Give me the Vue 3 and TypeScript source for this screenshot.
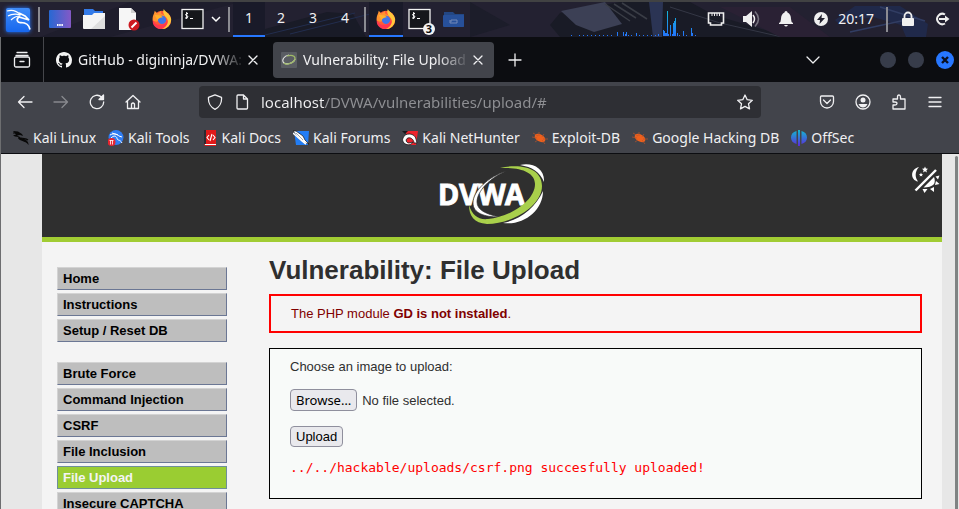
<script setup lang="ts">
import { ref } from 'vue'

interface Bookmark {
  icon: string
  label: string
}

interface MenuItem {
  label: string
  active?: boolean
}

const art: Record<string, string> = {
  firefox:
    '<circle cx="12" cy="13" r="10" fill="#ff5a36"/><path d="M2 14C1 9 4 6 4 3l3 3 4-3c-1 3 1 4 4 5l-2 4-7 3z" fill="#ff9330"/><path d="M12 23C5 23 1 18 2 13c2 5 6 6 10 5 4 0 6-3 5-7 3 3 2 9-5 12z" fill="#ff3750"/><path d="M14 1c1 3 7 5 8 11 0 6-4 11-10 11 6-3 8-8 5-12-2-3-5-5-3-10z" fill="#ffc83b"/><circle cx="12" cy="13" r="4.5" fill="#3f75e8"/><path d="M4 8c3-1 7 0 9 2-3 0-4 1-6 3z" fill="#ffb12b"/>',
  terminal:
    '<rect x="1" y="2.500" width="21" height="19" fill="#15171b" stroke="#f2f2f2" stroke-width="1.300"/><path d="M7 6.500H5.500L4.500 8l2.500 1.500-1 1.500H4M5.700 5v7M9 11.500h3" fill="none" stroke="#fff" stroke-width="1"/>',
  dragon:
    '<path d="M0 1l5 .5 4 2.500 1 2-3-1-3 .5 3 1.500c1 2 5 1 7 4 1 1 1.500 2 1.500 4-2-3-4-3-6-4-4-1-5-3-4-4L2 6.500 0 5.500l3-1z" fill="#080808"/><path d="M0 3l6 0M8 8c3 1 5 0 7 2" fill="none" stroke="#080808" stroke-width="1.200"/>',
  tools:
    '<circle cx="8" cy="7.500" r="7.500" fill="#2f7df3"/><path d="M2 5c4-2 7-1 9 1l3 1M3 8c3-3 5-2 6 0 0 3 3 1 5 5M4 3l6 2" fill="none" stroke="#fff" stroke-width="1"/><circle cx="3.500" cy="12" r="4" fill="#e6242f"/><path d="M1.500 10.500h4M2.500 10.500v4M4.500 10.500v4" stroke="#fff" stroke-width=".8"/>',
  docs:
    '<path d="M2 0h12v16H4q-2 0-2-2z" fill="#e01919"/><path d="M2 0h2v14H2z" fill="#2b2b31"/><path d="M3 14h11v1H3z" fill="#fff"/><path d="M7 5L5 7.500 7 10M11 5l2 2.500L11 10M10 4L8 11" fill="none" stroke="#fff" stroke-width="1.100"/>',
  forums:
    '<path d="M1 1h15l-1 14H3z" fill="#227df5"/><path d="M0 1l3 0 7 5 2 4 4 4-4-1-6-4z" fill="#fff" stroke="#111" stroke-width=".7"/><path d="M0 3l9 8 4 3" stroke="#fff" stroke-width="1.600" fill="none"/><path d="M3 3l7 7" stroke="#777f88" stroke-width=".7"/>',
  nethunter:
    '<path d="M4 1h12l-2 14H5z" fill="#ed232c"/><path d="M0 1l6 0-3 3z" fill="#17171b"/><path d="M1 8c2-6 12-5 13 1l1 4-3 0c0-3-3-6-6-5-3 1-2 5 1 5l4-1c-2 4-7 3-9 1-1-1-2-3-1-5z" fill="#fff" stroke="#17171b" stroke-width=".8"/>',
  bug:
    '<ellipse cx="8" cy="8" rx="5.800" ry="3.600" transform="rotate(30 8 8)" fill="#ee601c"/><path d="M1 3l5 3M7 2v4M12 4l-2 3M0 7l5 1M3 12l3-2M13 14l-3-4M16 9l-5 0" stroke="#b8552c" stroke-width=".7"/>',
  offsec:
    '<defs><linearGradient id="os" gradientUnits="userSpaceOnUse" x1="0" y1="0" x2="0" y2="16"><stop stop-color="#11bad1"/><stop offset="1" stop-color="#5c29dc"/></linearGradient></defs><path d="M5.500 1v13C2 13 0 11 0 7.500S2 2 5.500 1zM10.500 1v13c3.500-1 5.500-3 5.500-6.500S14 2 10.500 1zM7 0h2v16H7z" fill="url(#os)"/>',
}

const bookmarks: Bookmark[] = [
  { icon: 'dragon', label: 'Kali Linux' },
  { icon: 'tools', label: 'Kali Tools' },
  { icon: 'docs', label: 'Kali Docs' },
  { icon: 'forums', label: 'Kali Forums' },
  { icon: 'nethunter', label: 'Kali NetHunter' },
  { icon: 'bug', label: 'Exploit-DB' },
  { icon: 'bug', label: 'Google Hacking DB' },
  { icon: 'offsec', label: 'OffSec' },
]

const workspaces = [1, 2, 3, 4]
const currentWorkspace = ref(1)
const address = ref('localhost/DVWA/vulnerabilities/upload/#')

const menu: MenuItem[][] = [
  [{ label: 'Home' }, { label: 'Instructions' }, { label: 'Setup / Reset DB' }],
  [
    { label: 'Brute Force' },
    { label: 'Command Injection' },
    { label: 'CSRF' },
    { label: 'File Inclusion' },
    { label: 'File Upload', active: true },
    { label: 'Insecure CAPTCHA' },
  ],
]

// [x, height] of every sample in the load graph
const load: [number, number][] = [
  [0, 1], [8, 1], [12, 1], [16, 1], [20, 1], [24, 1], [28, 1], [32, 1], [36, 1], [40, 1],
  [46, 4], [52, 4], [54, 2], [55, 4], [57, 1], [60, 1], [65, 3], [68, 1], [72, 1], [76, 1],
  [80, 1], [84, 1], [87, 2], [92, 6], [93, 5], [94, 3], [95, 3], [96, 25], [97, 2], [99, 11],
  [101, 2], [102, 13], [103, 15], [104, 18], [106, 3], [108, 1], [112, 5], [115, 1], [120, 8], [121, 3], [124, 1],
]
</script>

<template>
  <div class="screen">
    <header class="panel">
      <svg class="wallpaper" viewBox="0 0 959 35" preserveAspectRatio="none" aria-hidden="true">
        <rect width="959" height="35" fill="#232131" />
        <path d="M40 35L130 0h110L110 35z" fill="#1e1d2c" />
        <path d="M235 35V12l30 15 62-17 26 2 13 23z" fill="#191b27" />
        <path d="M265 33l90-22M290 32l80-20" stroke="#222d4e" />
        <path d="M470 0l40 23-40 12z" fill="#1c1d2a" />
        <path d="M550 23l10-12 60-11h70l24 13 75 22H560z" fill="#191b26" />
        <path d="M561 9l44-9 17 22-28 8-18-7z" fill="#3c4055" />
        <path d="M605 2l25 17M614 2l22 14M622 1l25 16" stroke="#3a3d46" stroke-width="1.500" />
        <path d="M649 0l4 35h9l1-35z" fill="#2b3454" />
        <path d="M670 5l50 16 62 14" stroke="#343745" fill="none" />
        <path d="M720 5h70l40 30h-50z" fill="#2a2134" />
        <path d="M835 18l20-14 45 0 28 18-2 13h-20l-5-12-28-8-35 6z" fill="#20294a" />
        <path d="M850 30l65-14M880 5l45 14" stroke="#313d63" stroke-width="1.500" />
      </svg>
      <button class="kali" aria-label="Applications">
        <svg viewBox="0 0 28 28" width="28" height="28"><defs><linearGradient id="kg" x2="0" y2="1"><stop stop-color="#3f8cf8" /><stop offset="1" stop-color="#1767ee" /></linearGradient></defs><rect x="2" y="2" width="24" height="24" rx="2" fill="url(#kg)" /><path d="M3 5c6-2 10 0 14 4M4 10c5-3 9-2 13-1M7 14c3-3 6-4 9-4" fill="none" stroke="#fff" stroke-width="1.200" /><path d="M15 7l6 3 4 4-5-1.500-5-1.500c-3 2-2 6 2 5.500 4 0 8 2 9 7" fill="none" stroke="#fff" stroke-width="1.700" /></svg>
      </button>
      <span class="divider"></span>
      <nav class="launchers" aria-label="Launchers">
        <button class="slot" aria-label="Show desktop"><svg viewBox="0 0 24 24" width="24" height="24"><defs><linearGradient id="dg"><stop stop-color="#2768d3" /><stop offset="1" stop-color="#8459c6" /></linearGradient></defs><rect x="1" y="3" width="22" height="18" rx="1" fill="url(#dg)" /><path d="M9 18h6" stroke="#fff" stroke-width="2" stroke-dasharray="1.500 .7" /></svg></button>
        <button class="slot" aria-label="File manager"><svg viewBox="0 0 24 24" width="24" height="24"><path d="M2 2h9l2 2h8v7H2z" fill="#337ae8" /><path d="M1 8h9l2-2h11v15q0 1-1 1H2q-1 0-1-1z" fill="#f4f4f4" /><path d="M23 9v13H9z" fill="#dedede" /></svg></button>
        <button class="slot" aria-label="Text editor"><svg viewBox="0 0 24 24" width="24" height="24"><path d="M3 1h12l5 5v17H3z" fill="#f6f6f6" /><path d="M15 1v5h5z" fill="#cfcfcf" /><circle cx="18" cy="18" r="5.500" fill="#cd1920" /><path d="M15.500 20.500l5-5" stroke="#fff" stroke-width="2" /></svg></button>
        <button class="slot" aria-label="Web browser"><svg viewBox="0 0 24 24" width="22" height="22" v-html="art.firefox"></svg></button>
        <button class="slot small" aria-label="Terminal"><svg viewBox="0 0 24 24" width="24" height="24" v-html="art.terminal"></svg></button>
        <button class="slot tiny" aria-label="More terminals"><svg viewBox="0 0 10 10" width="10" height="10"><path d="M1 3l4 4 4-4" fill="none" stroke="#fff" stroke-width="1.500" /></svg></button>
      </nav>
      <span class="divider"></span>
      <nav class="workspaces" aria-label="Workspaces">
        <button v-for="n in workspaces" :key="n" class="workspace" :class="{ current: n === currentWorkspace }" @click="currentWorkspace = n">{{ n }}</button>
      </nav>
      <span class="divider"></span>
      <nav class="tasks" aria-label="Windows">
        <button class="slot current" aria-label="Firefox"><svg viewBox="0 0 24 24" width="22" height="22" v-html="art.firefox"></svg></button>
        <button class="slot task" aria-label="Terminal windows"><svg viewBox="0 0 24 24" width="24" height="24" v-html="art.terminal"></svg><span class="count">3</span></button>
        <button class="slot" aria-label="Files"><svg viewBox="0 0 24 24" width="24" height="24"><path d="M2 5h9l2 2h9v12q0 1-1 1H2z" fill="#234784" /><rect x="1" y="8" width="21" height="12" rx="1" fill="#27509a" /><path d="M9 15v-2h6v3H8v-3" fill="none" stroke="#7489b8" /></svg></button>
      </nav>
      <svg class="load" viewBox="0 0 127 30" width="127" height="30" aria-hidden="true">
        <defs><linearGradient id="lg" gradientUnits="userSpaceOnUse" x1="0" y1="4" x2="0" y2="30"><stop stop-color="#12b9d8" /><stop offset="1" stop-color="#2474fa" /></linearGradient></defs>
        <rect v-for="bar in load" :key="bar[0]" :x="bar[0]" :y="30 - bar[1]" width="1" :height="bar[1]" fill="url(#lg)" />
      </svg>
      <div class="tray">
        <button class="slot" aria-label="Network"><svg viewBox="0 0 18 16" width="18" height="16"><path d="M1.500 2h15v10h-2v2h-11v-2h-2z" fill="none" stroke="#eee" stroke-width="1.600" /><path d="M5 2v3M7.500 2v3M10 2v3M12.500 2v3" stroke="#eee" /></svg></button>
        <button class="slot" aria-label="Volume"><svg viewBox="0 0 18 18" width="18" height="18"><path d="M1 6h3l6-5v16l-6-5H1z" fill="#f0f0f0" /><path d="M11 5q3 4 0 8" fill="none" stroke="#f0f0f0" stroke-width="1.500" /><path d="M13 1.500q7 7.500 0 15" fill="none" stroke="#77747f" stroke-width="1.500" /></svg></button>
        <button class="slot" aria-label="Notifications"><svg viewBox="0 0 16 16" width="16" height="16"><path d="M8 0q1.500 0 1.500 1.500Q13 3 13 8q0 3 2 4v1H1v-1q2-1 2-4 0-5 3.500-6.500Q6.500 0 8 0zM6 14h4q-2 3-4 0z" fill="#f0f0f0" /></svg></button>
        <button class="slot" aria-label="Power"><svg viewBox="0 0 16 16" width="16" height="16"><circle cx="8" cy="8" r="7" fill="#f0f0f0" /><path d="M9 3L4 9h3l-.5 4L12 7H8.500z" fill="#22212f" /></svg></button>
      </div>
      <time class="clock">20:17</time>
      <span class="divider"></span>
      <div class="tray session">
        <button class="slot" aria-label="Lock"><svg viewBox="0 0 16 16" width="16" height="16"><path d="M4.500 7V5a3.500 3.500 0 017 0v2" fill="none" stroke="#eee" stroke-width="1.800" /><rect x="2" y="7" width="12" height="8" rx="1" fill="#f0f0f0" /></svg></button>
        <button class="slot" aria-label="Log out"><svg viewBox="0 0 16 16" width="16" height="16"><path d="M11 3.500a5.200 5.200 0 100 9M5 8h8" fill="none" stroke="#eee" stroke-width="2" /><path d="M11 4.500l4.500 3.500L11 11.500z" fill="#eee" /></svg></button>
      </div>
    </header>

    <div class="browser">
      <div class="tabbar">
        <button class="overview" aria-label="Firefox View"><svg viewBox="0 0 18 18" width="18" height="18" class="line"><path d="M4 1.500h10M3 4.500h12" /><rect x="1.500" y="6" width="15" height="10" rx="1.500" /><path d="M7 10.500h4" /></svg></button>
        <div class="tab">
          <svg viewBox="0 0 16 16" width="16" height="16"><path fill="#f4f4f4" d="M8 0C3.580 0 0 3.580 0 8c0 3.540 2.290 6.530 5.470 7.590.4.070.55-.17.55-.38 0-.19-.01-.82-.01-1.490-2.010.37-2.530-.49-2.690-.94-.09-.23-.48-.94-.82-1.130-.28-.15-.68-.52-.01-.53.63-.01 1.080.58 1.230.82.72 1.210 1.870.87 2.330.66.07-.52.28-.87.51-1.070-1.780-.2-3.640-.89-3.640-3.950 0-.87.31-1.590.82-2.150-.08-.2-.36-1.020.08-2.120 0 0 .67-.21 2.200.82.64-.18 1.320-.27 2-.27s1.360.09 2 .27c1.530-1.040 2.200-.82 2.200-.82.44 1.100.16 1.920.08 2.120.51.56.82 1.270.82 2.150 0 3.070-1.870 3.750-3.650 3.950.29.25.54.73.54 1.480 0 1.070-.01 1.930-.01 2.200 0 .21.15.46.55.38A8.010 8.010 0 0016 8c0-4.420-3.580-8-8-8z" /></svg>
          <span class="tab-title">GitHub - digininja/DVWA:</span>
          <button class="close" aria-label="Close tab"><svg viewBox="0 0 10 10" width="10" height="10" class="line"><path d="M1 1l8 8M9 1L1 9" /></svg></button>
        </div>
        <div class="tab selected">
          <svg viewBox="0 0 16 16" width="16" height="16"><rect width="16" height="16" rx="1" fill="#5a5d63" /><path d="M8 3C3 4 0 8 3 11c3 2 10 0 11-4" fill="none" stroke="#e1e3e0" stroke-width="1.100" /><path d="M6 4c6-2 10 1 7 5-3 3-8 4-10 2" fill="none" stroke="#9fb967" stroke-width="1.300" /></svg>
          <span class="tab-title">Vulnerability: File Upload :</span>
          <button class="close" aria-label="Close tab"><svg viewBox="0 0 10 10" width="10" height="10" class="line"><path d="M1 1l8 8M9 1L1 9" /></svg></button>
        </div>
        <button class="add" aria-label="New tab"><svg viewBox="0 0 14 14" width="14" height="14" class="line"><path d="M7 1v12M1 7h12" /></svg></button>
        <button class="add all" aria-label="List all tabs"><svg viewBox="0 0 14 8" width="14" height="8" class="line"><path d="M1 1l6 6 6-6" /></svg></button>
        <div class="window-controls">
          <button class="dot" aria-label="Minimize"></button>
          <button class="dot" aria-label="Maximize"></button>
          <button class="dot quit" aria-label="Close window"><svg viewBox="0 0 10 10" width="10" height="10"><path d="M2 2l6 6M8 2L2 8" stroke="#0b1020" stroke-width="2.400" /></svg></button>
        </div>
      </div>

      <div class="navbar">
        <button class="tool" aria-label="Back"><svg viewBox="0 0 16 16" width="16" height="16" class="line"><path d="M15 8H1.500M7 2.500L1.500 8 7 13.500" /></svg></button>
        <button class="tool" aria-label="Forward" disabled><svg viewBox="0 0 16 16" width="16" height="16" class="line"><path d="M1 8h13.500M9 2.500L14.500 8 9 13.500" /></svg></button>
        <button class="tool" aria-label="Reload"><svg viewBox="0 0 16 16" width="16" height="16" class="line"><path d="M12.500 3A6.700 6.700 0 1014.700 8" /><path d="M14.500 1v4.500H10z" fill="#f0f0f2" /></svg></button>
        <button class="tool" aria-label="Home"><svg viewBox="0 0 16 16" width="16" height="16" class="line"><path d="M1 8l7-6.500L15 8M2.500 7v7.500h11V7M6.500 14.500V10q1.500-2 3 0v4.500" /></svg></button>
        <div class="urlbar">
          <svg viewBox="0 0 16 16" width="16" height="16" class="line"><path d="M8 .8l6.500 2.600C15 9 12 13.500 8 15.300 4 13.500 1 9 1.500 3.400z" /></svg>
          <svg viewBox="0 0 16 16" width="16" height="16" class="line"><path d="M3 2q0-1 1-1h5.500l4 4v9q0 1-1 1H4q-1 0-1-1zM9.500 1v4h4" /></svg>
          <input v-model="address" class="address" type="text" aria-label="Address" spellcheck="false" />
          <button class="star" aria-label="Bookmark this page"><svg viewBox="0 0 16 16" width="16" height="16" class="line"><path d="M8 1l2.200 4.700 5.100.6-3.800 3.500 1 5.100L8 12.400l-4.500 2.500 1-5.100L.7 6.300l5.100-.6z" /></svg></button>
        </div>
        <button class="tool" aria-label="Save to Pocket"><svg viewBox="0 0 16 16" width="16" height="16" class="line"><path d="M2.500 2h11q1 0 1 1v4.500a6.500 6.500 0 01-13 0V3q0-1 1-1zM4.500 6L8 9.500 11.500 6" /></svg></button>
        <button class="tool" aria-label="Account"><svg viewBox="0 0 16 16" width="16" height="16" class="line"><circle cx="8" cy="8" r="7" /><circle cx="8" cy="6" r="2.500" fill="#f0f0f2" stroke="none" /><path d="M3.500 10h9q-1.500 3.500-4.500 3.500T3.500 10z" fill="#f0f0f2" stroke="none" /></svg></button>
        <button class="tool" aria-label="Extensions"><svg viewBox="0 0 16 16" width="16" height="16" class="line"><path d="M2 15v-4h2q2 0 2-1.500T4 8H2V5h4.500V3q0-2 1.500-2t1.500 2v2H14v10z" /></svg></button>
        <button class="tool" aria-label="Menu"><svg viewBox="0 0 16 16" width="16" height="16" class="line"><path d="M2 3.500h12M2 8h12M2 12.500h12" /></svg></button>
      </div>

      <nav class="bookmarks" aria-label="Bookmarks">
        <a v-for="mark in bookmarks" :key="mark.label" href="#">
          <svg viewBox="0 0 16 16" width="16" height="16" v-html="art[mark.icon]"></svg>
          <span>{{ mark.label }}</span>
        </a>
      </nav>

      <div class="viewport">
        <div class="page">
          <div class="banner">
            <svg class="logo" viewBox="0 0 112 68" width="112" height="68" role="img" aria-label="DVWA">
              <path d="M84 5c12-3 25 3 24 17C104 12 96 7 84 5zM107 31c0 19-19 35-40 32 17-3 33-16 40-32z" fill="#fff" />
              <text x="2" y="45">DVWA</text>
              <path d="M70 11C52 17 37 31 37 43c0 10 11 14 26 14-13-3-22-7-22-15 0-11 13-24 29-31z" fill="#fff" stroke="#2f2f2f" stroke-width=".7" />
              <path d="M64 8c21-5 42 0 42 18 0 20-30 38-55 38-13-1-18-8-18-19 3 10 9 15 19 14 22-2 47-18 47-35C99 12 84 7 64 8z" fill="#a9d04b" />
            </svg>
            <button class="theme" aria-label="Toggle theme"><svg viewBox="0 0 28 28" width="28" height="28"><path d="M7 1C-2 3-2 14 6 15.500 2.500 11 3 5 7 1zM13 .5l.9 2 2.100.2-1.600 1.500.5 2.200L13 5.300l-1.900 1.100.5-2.200L10 2.700l2.100-.2zM9 6.500l.6 1.400 1.500.1-1.100 1 .3 1.500L9 9.700l-1.300.8.3-1.500-1.100-1 1.500-.1z" fill="#fff" /><path d="M3.500 24.500L24 4" stroke="#fff" stroke-width="2.400" /><path d="M11.500 21.500L22 11q4 10-10.500 10.500zM23.500 10.500l4-1-1.500 4zM24 15l3.500 3-4.500 1zM18 23l4-2 0 5zM10.500 23l5 0-3 4z" fill="#fff" /></svg></button>
          </div>
          <div class="columns">
            <nav class="menu" aria-label="Main menu">
              <ul v-for="(group, i) in menu" :key="i">
                <li v-for="item in group" :key="item.label">
                  <a href="#" :class="{ active: item.active }">{{ item.label }}</a>
                </li>
              </ul>
            </nav>
            <main class="content">
              <h1>Vulnerability: File Upload</h1>
              <div class="warning">The PHP module <strong>GD is not installed</strong>.</div>
              <form class="upload" @submit.prevent>
                <p id="prompt">Choose an image to upload:</p>
                <div class="picker">
                  <input id="image" class="file" type="file" accept="image/*" aria-labelledby="prompt" />
                  <label for="image" class="button browse">Browse…</label>
                  <span>No file selected.</span>
                </div>
                <button type="submit" class="button">Upload</button>
                <pre>../../hackable/uploads/csrf.png succesfully uploaded!</pre>
              </form>
            </main>
          </div>
        </div>
        <div class="scrollbar"></div>
      </div>
    </div>
  </div>
</template>

<style>
body {
  margin: 0;
  overflow: hidden;
}
</style>

<style scoped>
.screen,
.screen * {
  box-sizing: border-box;
}

.screen {
  display: flex;
  flex-direction: column;
  height: 100vh;
  font-family: 'Noto Sans', 'Open Sans', sans-serif;
  font-size: 14px;
  color: #f0f0f2;
}

button {
  padding: 0;
  border: 0;
  background: none;
  color: inherit;
  font: inherit;
}

svg {
  display: block;
  flex: none;
}

.line {
  fill: none;
  stroke: #f0f0f2;
  stroke-width: 1.3;
  stroke-linejoin: round;
  stroke-linecap: round;
}

/* desktop panel */
.panel {
  position: relative;
  display: flex;
  flex: none;
  align-items: stretch;
  height: 37px;
  border-top: 2px solid #414243;
  background: #21202f;
}

.wallpaper {
  position: absolute;
  inset: 0;
  width: 100%;
  height: 100%;
}

.panel > :not(.wallpaper) {
  position: relative;
}

.kali {
  display: grid;
  place-items: center;
  width: 28px;
  margin: 0 6px 0 4px;
}

.kali svg {
  filter: drop-shadow(0 0 2px #2777ff);
}

.divider {
  flex: none;
  align-self: center;
  width: 2px;
  height: 25px;
  background: #8b8b92;
}

.launchers,
.workspaces,
.tasks,
.tray {
  display: flex;
  margin: 0 3px;
}

.launchers {
  margin-right: 2px;
}

.slot {
  display: grid;
  place-items: center;
  width: 34px;
  border-bottom: 2px solid transparent;
}

.slot.small {
  width: 27px;
}

.slot.tiny {
  width: 20px;
}

.workspace {
  width: 32px;
  padding-bottom: 2px;
  border-bottom: 2px solid transparent;
}

.current {
  border-bottom-color: #2777ff;
  background: #191a29;
}

.task {
  position: relative;
}

.count {
  position: absolute;
  right: 2px;
  bottom: 0;
  width: 12px;
  height: 12px;
  border-radius: 50%;
  background: #f2f2f2;
  color: #111;
  font-size: 11px;
  font-weight: 700;
  line-height: 12px;
}

.load {
  align-self: flex-end;
  margin: 0 0 1px auto;
}

.tray {
  margin: 0;
}

.tray .slot {
  width: 35px;
}

.clock {
  padding: 7px 12px 0 0;
}

.session {
  margin-left: 3px;
}

.session .slot {
  width: 34px;
}

/* browser */
.browser {
  display: flex;
  flex: 1;
  flex-direction: column;
  min-height: 0;
  border-left: 1px solid #6d6e70;
}

.tabbar {
  display: flex;
  flex: none;
  align-items: center;
  height: 45px;
  background: #0c0d11;
}

.overview {
  display: grid;
  align-self: stretch;
  place-items: center;
  width: 43px;
  margin-right: 4px;
  border-right: 1px solid #45464b;
}

.tab {
  display: flex;
  align-items: center;
  width: 221px;
  height: 36px;
  margin-right: 4px;
  padding: 0 8px;
  border-radius: 4px;
}

.tab.selected {
  background: #42444b;
}

.tab-title {
  flex: 1;
  min-width: 0;
  padding-left: 6px;
  overflow: hidden;
  white-space: nowrap;
  mask-image: linear-gradient(to left, transparent, #000 32px);
}

.close {
  padding: 3px;
}

.add {
  display: grid;
  place-items: center;
  width: 34px;
  height: 34px;
}

.all {
  margin-left: auto;
}

.window-controls {
  display: flex;
  align-items: center;
  gap: 12px;
  margin: 0 5px 0 50px;
}

.dot {
  width: 16px;
  height: 16px;
  border-radius: 50%;
  background: #373c4a;
}

.quit {
  display: grid;
  place-items: center;
  width: 18px;
  height: 18px;
  background: #2777ff;
}

.navbar {
  display: flex;
  flex: none;
  align-items: center;
  height: 40px;
  padding: 0 6px;
  background: #42444b;
}

.tool {
  display: grid;
  flex: none;
  place-items: center;
  width: 36px;
  height: 32px;
}

.tool:disabled {
  opacity: 0.4;
}

.urlbar {
  display: flex;
  flex: 1;
  align-items: center;
  gap: 11px;
  min-width: 0;
  height: 32px;
  margin: 0 48px;
  padding: 0 8px;
  border-radius: 4px;
  background: #2e2f34;
}

.address {
  flex: 1;
  min-width: 0;
  height: 24px;
  padding: 0;
  border: 0;
  outline: 0;
  background: linear-gradient(to right, #f0f0f2 64px, #8f9094 64px);
  background-clip: text;
  color: transparent;
  caret-color: #f0f0f2;
  font: inherit;
  font-size: 15px;
}

.bookmarks {
  display: flex;
  flex: none;
  align-items: center;
  gap: 12px;
  height: 32px;
  padding: 0 12px;
  border-bottom: 1px solid #0c0d11;
  background: #42444b;
}

.bookmarks a {
  display: flex;
  align-items: center;
  gap: 4px;
  color: inherit;
  white-space: nowrap;
  text-decoration: none;
}

/* page */
.viewport {
  display: flex;
  flex: 1;
  min-height: 0;
  overflow: hidden;
  background: #e7e7e7;
  font-family: 'Liberation Sans', Arial, sans-serif;
  font-size: 13px;
  line-height: 15px;
  color: #2f2f2f;
}

.page {
  flex: 1;
  min-width: 0;
  margin: 0 13px 0 41px;
}

.scrollbar {
  flex: none;
  width: 3px;
  margin: 2px 1px 0 0;
  border-radius: 2px 2px 0 0;
  background: #7f8383;
}

.banner {
  position: relative;
  display: flex;
  justify-content: center;
  height: 88px;
  padding-top: 6px;
  border-bottom: 5px solid #a1cc33;
  background: #2f2f2f;
}

.logo text {
  fill: #fff;
  stroke: #fff;
  stroke-width: 0.8;
  font-family: 'Noto Sans', sans-serif;
  font-size: 29px;
  font-weight: 700;
}

.theme {
  position: absolute;
  top: 12px;
  right: 2px;
}

.columns {
  display: flex;
  min-height: 100%;
  background: #f4f4f4;
}

.menu {
  flex: none;
  width: 170px;
  margin: 25px 42px 0 15px;
}

.menu ul {
  margin: 0 0 20px;
  padding: 0;
  list-style: none;
}

.menu li {
  margin-bottom: 3px;
}

.menu a {
  display: block;
  padding: 3px 5px;
  border: 1px solid;
  border-color: #d3d3d3 #6b7794 #6b7794 #d3d3d3;
  background: #bebebe;
  color: #000;
  font-weight: 700;
  text-decoration: none;
}

.menu a.active {
  border-color: #6f8f9a;
  background: #9acd32;
  color: #f4f4f4;
}

.content {
  flex: 1;
  min-width: 0;
  padding: 13px 20px 0 0;
}

h1 {
  margin: 0 0 9px;
  font-size: 26px;
  line-height: 30px;
}

.warning {
  margin-bottom: 15px;
  padding: 10px 20px;
  border: 2px solid #f00;
  color: #800000;
}

.upload {
  padding: 10px 20px 23px;
  border: 1px solid #000;
  background: #f8faf9;
}

.upload p {
  margin: 0 0 15px;
}

.picker {
  position: relative;
  display: flex;
  align-items: center;
  gap: 5px;
  margin-bottom: 15px;
}

.file {
  position: absolute;
  width: 1px;
  height: 1px;
  opacity: 0;
}

.button {
  display: inline-block;
  padding: 2px 5px;
  border: 1px solid #8f8f9d;
  border-radius: 4px;
  background: #e9e9ed;
  color: #000;
  line-height: 15px;
}

.browse {
  font-family: 'Noto Sans', sans-serif;
  line-height: 16px;
}

pre {
  margin: 13px 0 0;
  color: #f00;
  font-family: 'DejaVu Sans Mono', monospace;
  font-size: 13px;
}
</style>
